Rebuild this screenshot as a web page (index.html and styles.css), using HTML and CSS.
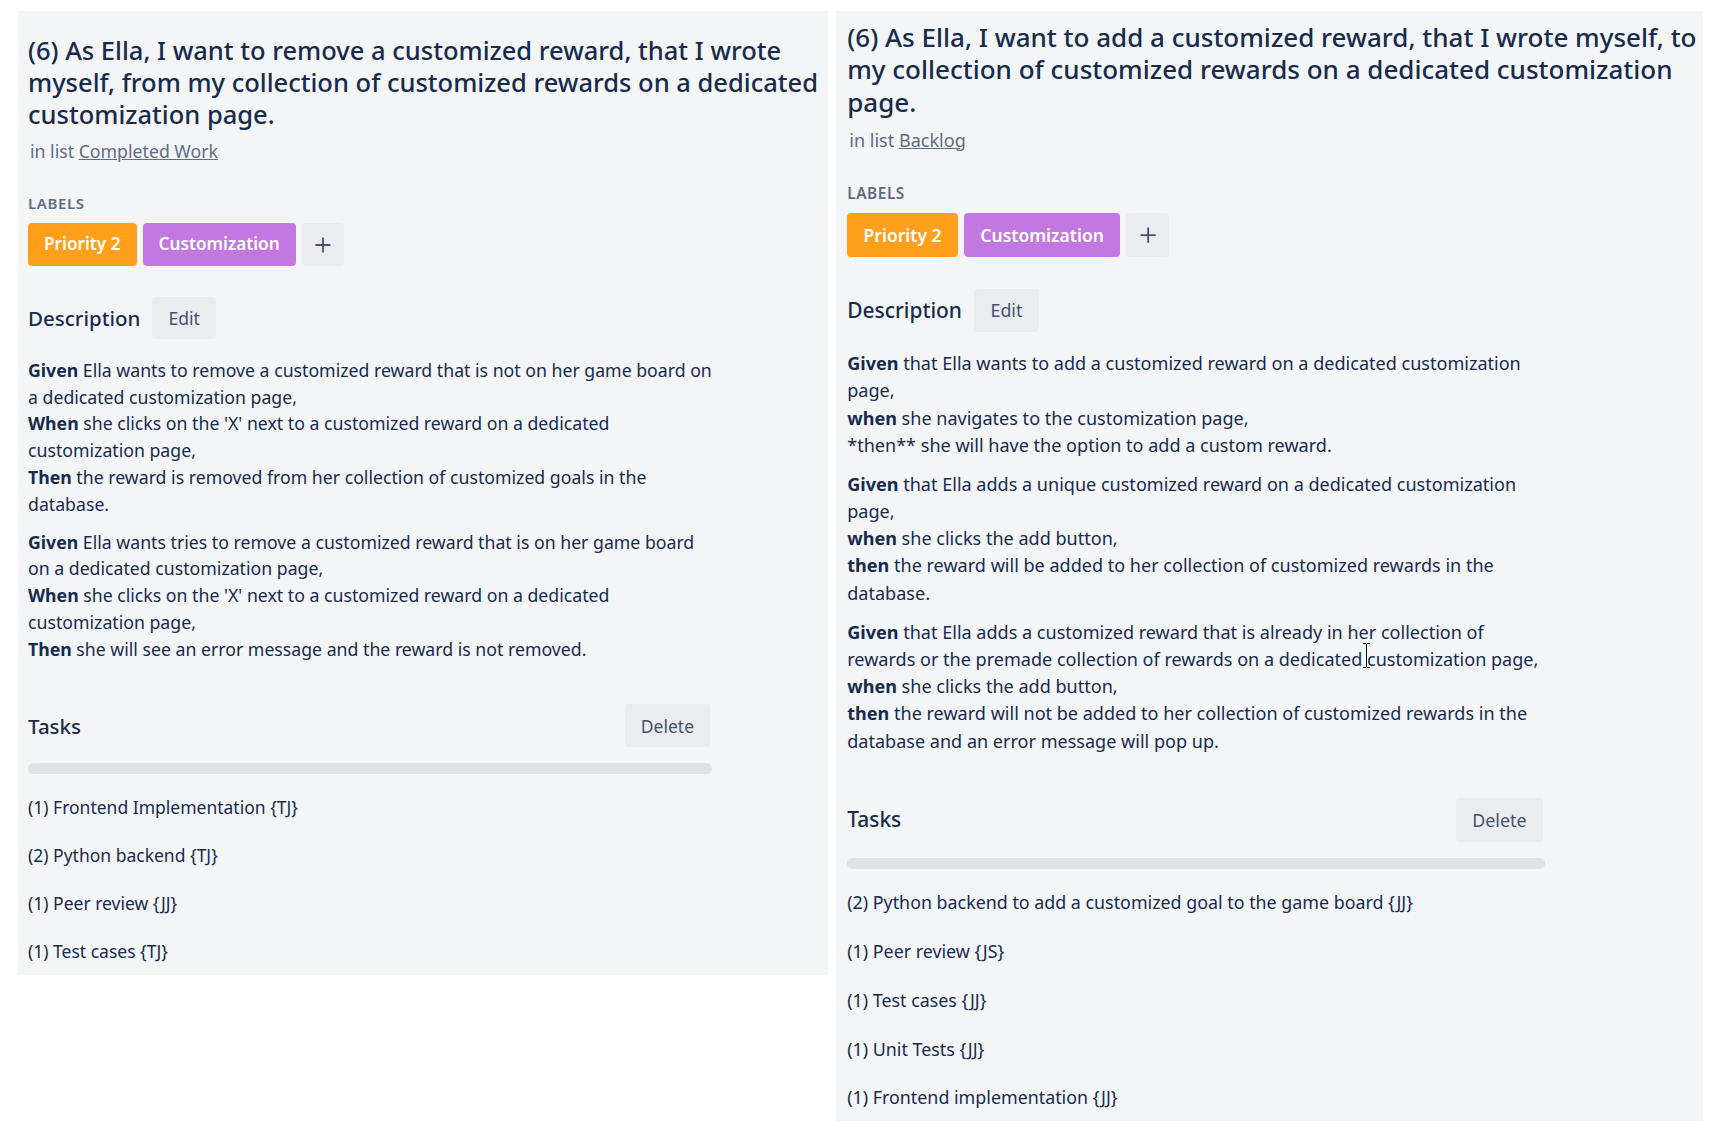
FILE: index.html
```html
<!DOCTYPE html>
<html lang="en">
<head>
<meta charset="utf-8">
<title>Card details</title>
<link rel="stylesheet" href="styles.css">
</head>
<body>
<div class="page">
  <section class="card card-left">
    <h1 class="card-title">(6) As Ella, I want to remove a customized reward, that I wrote<br>myself, from my collection of customized rewards on a dedicated<br>customization page.</h1>
    <p class="in-list">in list <a href="#">Completed Work</a></p>
    <h4 class="labels-title">Labels</h4>
    <div class="label-row">
      <span class="label label-orange">Priority 2</span>
      <span class="label label-purple">Customization</span>
      <button class="add-label" aria-label="Add label"><svg width="16" height="16" viewBox="0 0 16 16"><path d="M8 .5v15M.5 8h15" stroke="#42526e" stroke-width="1.8" fill="none"/></svg></button>
    </div>
    <div class="section-head">
      <h3 class="section-title">Description</h3>
      <button class="btn">Edit</button>
    </div>
    <div class="desc">
      <p><b>Given</b> Ella wants to remove a customized reward that is not on her game board on<br>a dedicated customization page,<br><b>When</b> she clicks on the 'X' next to a customized reward on a dedicated<br>customization page,<br><b>Then</b> the reward is removed from her collection of customized goals in the<br>database.</p>
      <p><b>Given</b> Ella wants tries to remove a customized reward that is on her game board<br>on a dedicated customization page,<br><b>When</b> she clicks on the 'X' next to a customized reward on a dedicated<br>customization page,<br><b>Then</b> she will see an error message and the reward is not removed.</p>
    </div>
    <div class="tasks-head">
      <h3 class="section-title">Tasks</h3>
      <button class="btn btn-delete">Delete</button>
    </div>
    <div class="progress"></div>
    <ul class="tasks">
      <li>(1) Frontend Implementation {TJ}</li>
      <li>(2) Python backend {TJ}</li>
      <li>(1) Peer review {JJ}</li>
      <li>(1) Test cases {TJ}</li>
    </ul>
  </section>

  <section class="card card-right">
    <h1 class="card-title">(6) As Ella, I want to add a customized reward, that I wrote myself, to<br>my collection of customized rewards on a dedicated customization<br>page.</h1>
    <p class="in-list">in list <a href="#">Backlog</a></p>
    <h4 class="labels-title">Labels</h4>
    <div class="label-row">
      <span class="label label-orange">Priority 2</span>
      <span class="label label-purple">Customization</span>
      <button class="add-label" aria-label="Add label"><svg width="16" height="16" viewBox="0 0 16 16"><path d="M8 .5v15M.5 8h15" stroke="#42526e" stroke-width="1.8" fill="none"/></svg></button>
    </div>
    <div class="section-head">
      <h3 class="section-title">Description</h3>
      <button class="btn">Edit</button>
    </div>
    <div class="desc">
      <p><b>Given</b> that Ella wants to add a customized reward on a dedicated customization<br>page,<br><b>when</b> she navigates to the customization page,<br>*then** she will have the option to add a custom reward.</p>
      <p><b>Given</b> that Ella adds a unique customized reward on a dedicated customization<br>page,<br><b>when</b> she clicks the add button,<br><b>then</b> the reward will be added to her collection of customized rewards in the<br>database.</p>
      <p><b>Given</b> that Ella adds a customized reward that is already in her collection of<br>rewards or the premade collection of rewards on a dedicated customization page,<br><b>when</b> she clicks the add button,<br><b>then</b> the reward will not be added to her collection of customized rewards in the<br>database and an error message will pop up.</p>
    </div>
    <div class="tasks-head">
      <h3 class="section-title">Tasks</h3>
      <button class="btn btn-delete">Delete</button>
    </div>
    <div class="progress"></div>
    <ul class="tasks">
      <li>(2) Python backend to add a customized goal to the game board {JJ}</li>
      <li>(1) Peer review {JS}</li>
      <li>(1) Test cases {JJ}</li>
      <li>(1) Unit Tests {JJ}</li>
      <li>(1) Frontend implementation {JJ}</li>
    </ul>
  </section>

  <svg class="ibeam" width="9" height="27" viewBox="0 0 9 27" aria-hidden="true">
    <path d="M1 1.5h2.5l1 1 1-1H8M4.5 2.5v22M1 25.5h2.5l1-1 1 1H8" stroke="#fff" stroke-width="3" fill="none"/>
    <path d="M1 1.5h2.5l1 1 1-1H8M4.5 2.5v22M1 25.5h2.5l1-1 1 1H8" stroke="#000" stroke-width="1" fill="none"/>
  </svg>
</div>
</body>
</html>
```

FILE: styles.css
```css
* { box-sizing: border-box; }

html, body {
  margin: 0;
  background: #ffffff;
}

body {
  font-family: "Noto Sans", "Open Sans", "Liberation Sans", sans-serif;
  color: #172b4d;
}

.page {
  position: relative;
  display: flex;
  align-items: flex-start;
  gap: 8px;
  padding: 11px 0 0 18px;
}

.card {
  background: #f4f5f7;
  padding: 23px 10px 0 10px;
  font-size: 17.5px;
  line-height: 26.7px;
}

.card-left { width: 810px; }

.card-right {
  width: 850px;
  padding: 9.5px 10px 0 11px;
  zoom: 1.02;
}

.card-right .tasks li:last-child { height: 46px; }

.card-title {
  margin: 0;
  font-size: 25.5px;
  line-height: 32px;
  font-weight: 500;
  white-space: nowrap;
  color: #172b4d;
}

.in-list {
  margin: 9px 0 0 2px;
  line-height: 24px;
  font-size: 17.7px;
  color: #5e6c84;
}

.in-list a {
  color: #5e6c84;
  text-decoration: underline;
}

.labels-title {
  margin: 30px 0 0;
  font-size: 15px;
  line-height: 20px;
  font-weight: 600;
  text-transform: uppercase;
  letter-spacing: 0.04em;
  color: #5e6c84;
}

.label-row {
  display: flex;
  gap: 6px;
  margin-top: 10px;
}

.label {
  height: 43px;
  padding: 0 16px;
  border-radius: 4px;
  color: #ffffff;
  font-size: 17.2px;
  font-weight: 600;
  display: flex;
  align-items: center;
}

.label-orange { background: #ff9f1a; }
.label-purple { background: #c377e0; }

.add-label {
  width: 42px;
  height: 43px;
  padding: 0;
  border: 0;
  border-radius: 4px;
  background: #ebecf0;
  display: flex;
  align-items: center;
  justify-content: center;
}

.section-head {
  display: flex;
  align-items: center;
  gap: 12px;
  margin-top: 31px;
}

.section-title {
  margin: 0;
  font-size: 20.5px;
  line-height: 26px;
  font-weight: 500;
  color: #172b4d;
}

.btn {
  height: 42px;
  padding: 0 16px;
  border: 0;
  border-radius: 4px;
  background: #ebecf0;
  color: #42526e;
  font-family: inherit;
  font-size: 17.5px;
}

.desc {
  width: 684px;
  margin-top: 18px;
  font-size: 17.7px;
}

.desc p {
  margin: 0 0 11.5px;
  white-space: nowrap;
}

.desc p:last-child { margin-bottom: 0; }

.desc b { font-weight: 700; color: #172b4d; }

.tasks-head {
  width: 684px;
  display: flex;
  justify-content: space-between;
  align-items: center;
  margin-top: 42px;
}

.btn-delete {
  height: 43px;
  margin-right: 2px;
}

.progress {
  width: 684px;
  height: 10.5px;
  margin-top: 16px;
  border-radius: 6px;
  background: #dfe1e6;
}

.tasks {
  list-style: none;
  margin: 9.5px 0 0;
  padding: 0;
}

.tasks li {
  height: 48px;
  display: flex;
  align-items: center;
}

.ibeam {
  position: absolute;
  left: 1362px;
  top: 642px;
}
```
